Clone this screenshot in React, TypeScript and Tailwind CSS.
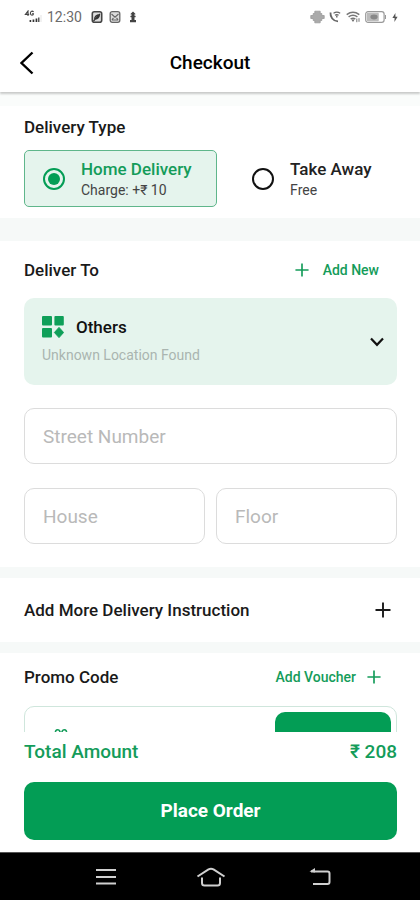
import { useState } from "react";

interface IconProps {
  className?: string;
}

const PlusIcon = ({ className }: IconProps) => (
  <svg viewBox="0 0 16 16" className={className} fill="none" stroke="currentColor" strokeWidth="1.9" aria-hidden="true">
    <path d="M8 0.5v15M0.5 8h15" />
  </svg>
);

const StatusBar = () => (
  <div className="flex h-[34px] shrink-0 items-center justify-between pl-6 pr-[22px] text-[#6b6b6b]">
    <div className="flex items-center">
      <svg width="18" height="14" viewBox="0 0 18 14" className="mr-[5px]" aria-hidden="true">
        <g fill="none" stroke="#444" strokeWidth="1.1">
          <path d="M4 6V1L1.400 4.400H5.200" />
          <path d="M9.600 2Q8.800 1 7.600 1.200Q6.400 1.600 6.400 3.300Q6.400 5.200 8 5.200Q9.400 5.200 9.500 3.800H8" />
        </g>
        <path d="M5.600 10h1.600V12H5.600zM8.600 9.500h1.700V12H8.600zM11.600 8.500h1.700V12h-1.700z" fill="#333" />
        <path d="M14.200 7.500h1.200V12h-1.200z" fill="#333" />
        <path d="M16.600 5h.8v7h-.8z" fill="#ddd" />
      </svg>
      <span className="mr-[9px] text-sm leading-4">12:30</span>
      <svg width="12" height="12" viewBox="0 0 11 12" className="mr-[6px]" aria-hidden="true">
        <rect x="0.8" y="0.8" width="9.4" height="10.4" rx="2" fill="#ddd" stroke="#444" strokeWidth="1.6" />
        <path d="M3 7.800Q3.500 4.200 8 3.600Q7.600 7.600 3.600 8.200M2 10L8.400 3" fill="none" stroke="#333" strokeWidth="1.2" />
      </svg>
      <svg width="12" height="12" viewBox="0 0 11 12" className="mr-2" aria-hidden="true">
        <rect x="0.7" y="0.7" width="9.6" height="10.6" rx="2" fill="#ddd" stroke="#666" strokeWidth="1.3" />
        <path d="M2 3L5.500 6.200L9 3M2.400 8.800L4 6.800M8.600 8.800L7 6.800M2.400 9h6.200" fill="none" stroke="#666" strokeWidth="1.1" />
      </svg>
      <svg width="8" height="12" viewBox="0 0 8 12" fill="#444" aria-hidden="true">
        <path d="M4 0.500L6.800 3.200H5.500V9H7V11.200H1V9H2.500V3.200H1.200Z" />
        <path d="M1.400 4.800h5.200v1.400H1.400z" />
      </svg>
    </div>
    <div className="flex items-center">
      <svg width="15" height="14" viewBox="0 0 15 14" className="mr-1" aria-hidden="true">
        <path d="M4.800 1.200h5.400v2.300h1.600v2h2.400v3h-2.400v2h-1.600v2.300H4.800v-2.300H3.200v-2H.8v-3h2.400v-2h1.600z" fill="#aaa" stroke="#999" strokeWidth="0.8" />
      </svg>
      <svg width="12" height="12" viewBox="0 0 12 12" className="mr-[5px]" fill="none" stroke="#666" aria-hidden="true">
        <path d="M1.500 1.500Q1.200 5 3.200 7.500Q5.500 10.300 9 10.400" strokeWidth="1.8" />
        <path d="M4.500 2.200Q7.800 0 11.200 2.200M6 4.200Q7.800 3 9.600 4.200" strokeWidth="1.1" />
        <path d="M7.800 4.400v2.200" strokeWidth="1.4" />
      </svg>
      <svg width="15" height="12" viewBox="0 0 15 12" className="mr-1" fill="none" stroke="#777" aria-hidden="true">
        <path d="M0.700 3.600Q7 -1 13.300 3.600M2.600 5.800Q7 2.600 11.400 5.800M4.600 8Q7 6.400 9.400 8" strokeWidth="1.5" />
        <path d="M5.400 8.600H8.600L7 11Z" fill="#666" stroke="none" />
        <path d="M10.800 7.600v3.600M13 7.200v3.600" strokeWidth="1" />
      </svg>
      <svg width="22" height="12" viewBox="0 0 22 12" className="mr-[5px]" aria-hidden="true">
        <rect x="0.7" y="0.7" width="18.4" height="10.6" rx="2.4" fill="#fff" stroke="#999" strokeWidth="1.2" />
        <rect x="1.8" y="1.8" width="12" height="8.4" rx="1" fill="#bbb" />
        <ellipse cx="9" cy="6" rx="3.6" ry="2.4" fill="#888" />
        <path d="M20 4h1v4h-1z" fill="#999" />
      </svg>
      <svg width="6" height="9" viewBox="0 0 6 9" fill="#555" aria-hidden="true">
        <path d="M3.400 0L0.400 5H2.600L2.400 9L5.600 3.800H3.400Z" />
      </svg>
    </div>
  </div>
);

interface DeliveryOptionProps {
  title: string;
  note: string;
  value: string;
  checked: boolean;
  onSelect: (value: string) => void;
}

const DeliveryOption = ({ title, note, value, checked, onSelect }: DeliveryOptionProps) => (
  <label
    className={`flex h-[57px] flex-auto items-center gap-4 rounded-[5px] border pl-[18px] ${
      checked ? "border-[#5fb68b] bg-[#e5f4ed]" : "border-transparent"
    }`}
  >
    <input
      type="radio"
      name="delivery"
      value={value}
      checked={checked}
      onChange={() => onSelect(value)}
      className="m-0 size-[22px] shrink-0 appearance-none rounded-full border-2 border-[#111] bg-clip-content p-[3px] checked:border-[#039d55] checked:bg-[#039d55]"
    />
    <span className="flex flex-col">
      <span className={`text-[17px] leading-[22px] font-medium ${checked ? "text-[#149c5a]" : "text-[#222]"}`}>{title}</span>
      <span className="text-sm leading-5 text-[#444]">{note}</span>
    </span>
  </label>
);

const Field = ({ label }: { label: string }) => (
  <input
    type="text"
    aria-label={label}
    placeholder={label}
    className="h-14 w-full min-w-0 rounded-[10px] border border-[#dcdcdc] bg-white px-[18px] text-[19px] text-[#222] outline-none placeholder:text-[#b9b9b9]"
  />
);

const NavigationBar = () => (
  <nav className="flex h-12 shrink-0 items-center justify-between border-t border-[#555] bg-black pr-[89px] pl-[95px] text-[#d0d0d0]">
    <button type="button" aria-label="Recent apps">
      <svg width="22" height="18" viewBox="0 0 22 18" stroke="currentColor" strokeWidth="2.2" aria-hidden="true">
        <path d="M1 2h20M1 9h20M1 15.500h20" />
      </svg>
    </button>
    <button type="button" aria-label="Home" className="pr-1">
      <svg width="30" height="20" viewBox="0 0 30 20" fill="none" stroke="currentColor" strokeWidth="2" aria-hidden="true">
        <path d="M1.500 9.500L12.500 2.300Q15 1 17.500 2.300L28.500 9.500" />
        <path d="M6 10.500V16Q6 18.500 8.500 18.500H21.500Q24 18.500 24 16V10.500" />
      </svg>
    </button>
    <button type="button" aria-label="Back">
      <svg width="22" height="19" viewBox="0 0 22 19" fill="none" stroke="currentColor" strokeWidth="2" aria-hidden="true">
        <path d="M2 4.500H18.500Q20.500 4.500 20.500 6.500V15Q20.500 17 18.500 17H4" />
        <path d="M0.500 4.500L6 1V5.500Z" fill="currentColor" stroke="none" />
      </svg>
    </button>
  </nav>
);

const App = () => {
  const [delivery, setDelivery] = useState("home");

  return (
    <div className="flex h-screen flex-col overflow-hidden bg-white font-[Roboto,sans-serif] text-[#1a1a1a]">
      <StatusBar />
      <header className="relative z-10 flex h-[58px] shrink-0 items-center bg-white px-5 shadow-[0_2px_2px_rgba(0,0,0,0.2)]">
        <button type="button" aria-label="Go back" className="w-6">
          <svg width="14" height="24" viewBox="0 0 14 24" fill="none" stroke="#000" strokeWidth="2.4" aria-hidden="true">
            <path d="M12.500 1.500L1.500 12L12.500 22.500" />
          </svg>
        </button>
        <h1 className="flex-1 pr-6 text-center text-[19px] font-medium text-black">Checkout</h1>
      </header>

      <main className="flex min-h-0 flex-1 flex-col gap-[11px] overflow-hidden bg-[#f6f9f8]">
        <section className="shrink-0 border-t-[14px] border-[#fafcfb] bg-white pt-[10px] pr-[23px] pb-[11px] pl-6">
          <h2 className="mb-3 text-[17px] leading-[22px] font-medium">Delivery Type</h2>
          <div className="flex gap-4">
            <DeliveryOption title="Home Delivery" note="Charge: +₹ 10" value="home" checked={delivery === "home"} onSelect={setDelivery} />
            <DeliveryOption title="Take Away" note="Free" value="takeaway" checked={delivery === "takeaway"} onSelect={setDelivery} />
          </div>
        </section>

        <section className="mt-3 shrink-0 bg-white pt-[18px] pr-[23px] pb-[23px] pl-6">
          <div className="flex items-center justify-between pr-[18px]">
            <h2 className="text-[17px] leading-[22px] font-medium">Deliver To</h2>
            <button type="button" className="flex items-center gap-[14px] text-sm font-medium text-[#149c5a]">
              <PlusIcon className="size-[14px]" />
              Add New
            </button>
          </div>

          <div className="mt-[17px] flex h-[87px] items-center rounded-[10px] bg-[#e5f4ed] pr-[13px] pl-[18px]">
            <div className="min-w-0 flex-1 pb-[2px]">
              <div className="flex items-center gap-3">
                <svg width="22" height="22" viewBox="0 0 22 22" fill="#0f9f59" aria-hidden="true">
                  <rect x="0" y="0" width="10" height="9.6" rx="1" />
                  <rect x="12.400" y="0" width="9.4" height="9.6" rx="1" />
                  <rect x="0" y="12" width="10" height="9.4" rx="1" />
                  <path d="M17 11.400L21.600 16.500L17 21.600L12.400 16.500Z" stroke="#0f9f59" strokeWidth="1" strokeLinejoin="round" />
                </svg>
                <select aria-label="Saved address" className="min-w-0 flex-1 appearance-none bg-transparent text-[17px] leading-6 font-medium text-[#111] outline-none">
                  <option>Others</option>
                </select>
              </div>
              <p className="mt-1 text-sm leading-6 text-[#aab5b0]">Unknown Location Found</p>
            </div>
            <svg width="14" height="10" viewBox="0 0 14 10" fill="none" stroke="#111" strokeWidth="2.2" aria-hidden="true">
              <path d="M1 1.500L7 7.800L13 1.500" />
            </svg>
          </div>

          <div className="mt-[23px] grid grid-cols-2 gap-x-[11px] gap-y-6">
            <div className="col-span-2">
              <Field label="Street Number" />
            </div>
            <Field label="House" />
            <Field label="Floor" />
          </div>
        </section>

        <section className="flex h-16 shrink-0 items-center justify-between bg-white pr-[29px] pl-6">
          <h2 className="text-[17px] leading-[22px] font-medium">Add More Delivery Instruction</h2>
          <button type="button" aria-label="Add instruction">
            <PlusIcon className="size-4" />
          </button>
        </section>

        <section className="shrink-0 bg-white pt-[13px] pr-[23px] pb-6 pl-6">
          <div className="flex items-center justify-between pr-4">
            <h2 className="text-[17px] leading-[22px] font-medium">Promo Code</h2>
            <button type="button" className="flex items-center gap-[11px] text-sm font-medium text-[#149c5a]">
              Add Voucher
              <PlusIcon className="size-[14px]" />
            </button>
          </div>
          <div className="mt-[18px] flex h-[58px] items-center rounded-[10px] border border-[#cfe6dc] py-[5px] pr-[5px] pl-[29px]">
            <svg width="14" height="12" viewBox="0 0 14 12" fill="none" stroke="#149c5a" strokeWidth="1.6" aria-hidden="true">
              <path d="M6.300 4Q5.800 0.800 3.600 0.800Q1.200 0.800 1.500 4M7.700 4Q8.200 0.800 10.400 0.800Q12.800 0.800 12.500 4M1 4.500h12v6.700H1zM7 4v7" />
            </svg>
            <input type="text" aria-label="Promo code" className="min-w-0 flex-1 bg-transparent px-3 outline-none" />
            <button type="button" aria-label="Apply promo code" className="h-full w-[116px] rounded-[10px] bg-[#039d55]" />
          </div>
        </section>
      </main>

      <footer className="shrink-0 bg-white pt-2 pr-[23px] pb-3 pl-6">
        <div className="flex justify-between text-[19px] leading-6 font-medium text-[#149c5a]">
          <span>Total Amount</span>
          <span>₹ 208</span>
        </div>
        <button type="button" className="mt-[18px] h-[58px] w-full rounded-[10px] bg-[#039d55] text-[19px] font-bold text-white">
          Place Order
        </button>
      </footer>
      <NavigationBar />
    </div>
  );
};

export default App;
